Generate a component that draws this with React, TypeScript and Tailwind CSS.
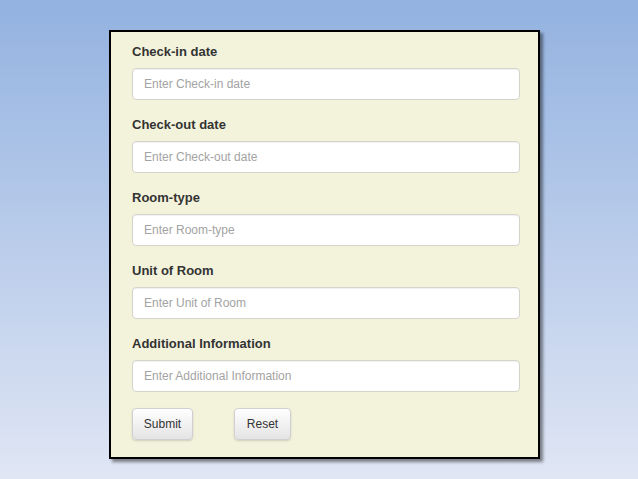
import React from "react";

const fields = [
  { label: "Check-in date", ph: "Enter Check-in date" },
  { label: "Check-out date", ph: "Enter Check-out date" },
  { label: "Room-type", ph: "Enter Room-type" },
  { label: "Unit of Room", ph: "Enter Unit of Room" },
  { label: "Additional Information", ph: "Enter Additional Information" },
];

export default function App() {
  return (
    <div
      className="w-[638px] h-[479px] bg-gradient-to-b from-[#93b2e0] to-[#e0e6f4] pt-[30px] pl-[109px] overflow-hidden"
      style={{ fontFamily: '"Liberation Sans", Arial, sans-serif' }}
    >
      <div className="w-[431px] h-[429px] border-2 border-black bg-[#f3f3dc] shadow-[3px_3px_3px_rgba(0,0,0,0.45)] pt-[11px] pl-[21px] pr-[18px]">
        <div className="flex flex-col gap-4">
          {fields.map((f) => (
            <div key={f.label} className="flex flex-col gap-[7px]">
              <label className="text-[13px] leading-[18px] font-bold text-[#333]">{f.label}</label>
              <input
                type="text"
                placeholder={f.ph}
                className="h-[32px] w-full rounded-[4px] border border-[#d4d4cc] bg-white px-[11px] text-[12px] text-[#555] placeholder:text-[#a3a3a3] shadow-[inset_0_1px_1px_rgba(0,0,0,0.06)] outline-none"
              />
            </div>
          ))}
          <div className="flex gap-[41px]">
            <button className="h-[32px] w-[61px] rounded-[4px] border border-[#d0d0d0] bg-gradient-to-b from-white to-[#e4e4e4] text-[12px] text-[#333] shadow-[0_1px_2px_rgba(0,0,0,0.15)]">
              Submit
            </button>
            <button className="h-[32px] w-[57px] rounded-[4px] border border-[#d0d0d0] bg-gradient-to-b from-white to-[#e4e4e4] text-[12px] text-[#333] shadow-[0_1px_2px_rgba(0,0,0,0.15)]">
              Reset
            </button>
          </div>
        </div>
      </div>
    </div>
  );
}
